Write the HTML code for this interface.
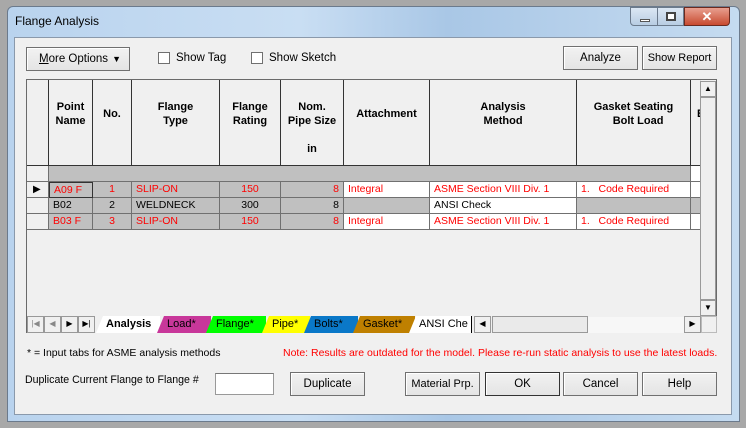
<!DOCTYPE html>
<html><head><style>
*{margin:0;padding:0;box-sizing:border-box}
body{width:746px;height:428px;overflow:hidden;background:#a8a8a8;font-family:"Liberation Sans",sans-serif;font-size:12px;color:#000;position:relative}
.a{position:absolute}
.frame{left:7px;top:6px;width:733px;height:416px;background:linear-gradient(90deg,#b9d3ee,#c9def3 40%,#a9c7e6 60%,#c5dbf0);border:1px solid #6b7a8c;border-radius:6px 6px 0 0}
.panel{left:14px;top:37px;width:718px;height:378px;background:#f0f0f0;border:1px solid #8a99ab}
.btn{position:absolute;background:linear-gradient(#f2f2f2,#e4e4e4);border:1px solid #707070;box-shadow:inset 1px 1px #fff;text-align:center;font-size:11.5px}
.cb{position:absolute;width:12px;height:12px;border:1px solid #707070;background:#fff}
.grid{left:26px;top:79px;width:691px;height:254px;border:1px solid #6a6a6a;background:#f0f0f0;overflow:hidden}
.c{position:absolute;border-right:1px solid #333;border-bottom:1px solid #333;font-weight:bold;text-align:center;font-size:11px;line-height:14px;background:#f0f0f0}
.r{position:absolute;border-right:1px solid #707070;border-bottom:1px solid #707070;font-size:10.5px;line-height:15px;padding:0 4px;white-space:nowrap;overflow:hidden}
.red{color:#f00}.g{background:#c0c0c0}.w{background:#fff}
.tab{position:absolute;top:316px;height:17px;font-size:11px;line-height:17px;padding-left:10px;clip-path:polygon(0 100%,7px 0,100% 0,100% 100%);white-space:nowrap;overflow:hidden}
.sb{position:absolute;background:#f0f0f0;border:1px solid #999;font-size:8px;text-align:center;line-height:14px}
</style></head><body>
<div class="a frame"></div>
<div class="a" style="left:15px;top:14px;font-size:12px">Flange Analysis</div>
<div class="a" style="left:630px;top:7px;width:28px;height:19px;border:1px solid #6b7a8c;border-radius:0 0 0 4px;background:linear-gradient(#dbe7f4,#b8cde3)"><div class="a" style="left:9px;top:11px;width:10px;height:3px;border:1px solid #555;background:#fff"></div></div>
<div class="a" style="left:657px;top:7px;width:27px;height:19px;border:1px solid #6b7a8c;background:linear-gradient(#dbe7f4,#b8cde3)"><div class="a" style="left:8px;top:4px;width:10px;height:9px;border:2px solid #444;background:#fff"></div></div>
<div class="a" style="left:684px;top:7px;width:46px;height:19px;border:1px solid #6b2a1f;border-radius:0 0 4px 0;background:linear-gradient(#e8a090,#c84a30);color:#fff;font-weight:bold;text-align:center;line-height:18px;font-size:13px">✕</div>
<div class="a panel"></div>
<div class="btn" style="left:26px;top:47px;width:104px;height:24px;line-height:22px;text-align:left;padding-left:12px"><u>M</u>ore Options<span style="position:absolute;right:8px;font-size:9px">▼</span></div>
<div class="cb" style="left:158px;top:52px"></div><div class="a" style="left:176px;top:52px;font-size:11.5px">Show Tag</div>
<div class="cb" style="left:251px;top:52px"></div><div class="a" style="left:269px;top:52px;font-size:11.5px">Show Sketch</div>
<div class="btn" style="left:563px;top:46px;width:75px;height:24px;line-height:22px">Analyze</div>
<div class="btn" style="left:642px;top:46px;width:75px;height:24px;line-height:22px;font-size:11px">Show Report</div>
<div class="a grid">
 <div class="c" style="left:0;top:0;width:22px;height:86px"></div>
 <div class="c" style="left:22px;top:0;width:44px;height:86px;padding-top:20px">Point<br>Name</div>
 <div class="c" style="left:66px;top:0;width:39px;height:86px;padding-top:27px">No.</div>
 <div class="c" style="left:105px;top:0;width:88px;height:86px;padding-top:20px">Flange<br>Type</div>
 <div class="c" style="left:193px;top:0;width:61px;height:86px;padding-top:20px">Flange<br>Rating</div>
 <div class="c" style="left:254px;top:0;width:63px;height:86px;padding-top:20px">Nom.<br>Pipe Size<br><br>in</div>
 <div class="c" style="left:317px;top:0;width:86px;height:86px;padding-top:27px">Attachment</div>
 <div class="c" style="left:403px;top:0;width:147px;height:86px;padding-top:20px">Analysis<br>Method</div>
 <div class="c" style="left:550px;top:0;width:114px;height:86px;padding-top:20px">Gasket Seating<br>&nbsp;&nbsp;&nbsp;Bolt Load</div>
 <div class="c" style="left:664px;top:0;width:20px;height:86px;padding-top:27px;text-align:left;padding-left:6px">B</div>
 <div class="r" style="left:0;top:86px;width:22px;height:16px;background:#f0f0f0"></div>
 <div class="r g" style="left:22px;top:86px;width:642px;height:16px"></div>
 <div class="r w" style="left:664px;top:86px;width:20px;height:16px"></div>
 <div class="r" style="left:0;top:102px;width:22px;height:16px;background:#f0f0f0;font-size:10px;padding-left:6px">▶</div>
 <div class="r g red" style="left:22px;top:102px;width:44px;height:16px;border:1px solid #333">A09 F</div>
 <div class="r g red" style="left:66px;top:102px;width:39px;height:16px;text-align:center">1</div>
 <div class="r g red" style="left:105px;top:102px;width:88px;height:16px">SLIP-ON</div>
 <div class="r g red" style="left:193px;top:102px;width:61px;height:16px;text-align:center">150</div>
 <div class="r g red" style="left:254px;top:102px;width:63px;height:16px;text-align:right">8</div>
 <div class="r w red" style="left:317px;top:102px;width:86px;height:16px">Integral</div>
 <div class="r w red" style="left:403px;top:102px;width:147px;height:16px">ASME Section VIII Div. 1</div>
 <div class="r w red" style="left:550px;top:102px;width:114px;height:16px">1.&nbsp;&nbsp; Code Required</div>
 <div class="r w" style="left:664px;top:102px;width:20px;height:16px"></div>
 <div class="r" style="left:0;top:118px;width:22px;height:16px;background:#f0f0f0"></div>
 <div class="r g" style="left:22px;top:118px;width:44px;height:16px">B02</div>
 <div class="r g" style="left:66px;top:118px;width:39px;height:16px;text-align:center">2</div>
 <div class="r g" style="left:105px;top:118px;width:88px;height:16px">WELDNECK</div>
 <div class="r g" style="left:193px;top:118px;width:61px;height:16px;text-align:center">300</div>
 <div class="r g" style="left:254px;top:118px;width:63px;height:16px;text-align:right">8</div>
 <div class="r g" style="left:317px;top:118px;width:86px;height:16px"></div>
 <div class="r w" style="left:403px;top:118px;width:147px;height:16px">ANSI Check</div>
 <div class="r g" style="left:550px;top:118px;width:114px;height:16px"></div>
 <div class="r g" style="left:664px;top:118px;width:20px;height:16px"></div>
 <div class="r" style="left:0;top:134px;width:22px;height:16px;background:#f0f0f0"></div>
 <div class="r g red" style="left:22px;top:134px;width:44px;height:16px">B03 F</div>
 <div class="r g red" style="left:66px;top:134px;width:39px;height:16px;text-align:center">3</div>
 <div class="r g red" style="left:105px;top:134px;width:88px;height:16px">SLIP-ON</div>
 <div class="r g red" style="left:193px;top:134px;width:61px;height:16px;text-align:center">150</div>
 <div class="r g red" style="left:254px;top:134px;width:63px;height:16px;text-align:right">8</div>
 <div class="r w red" style="left:317px;top:134px;width:86px;height:16px">Integral</div>
 <div class="r w red" style="left:403px;top:134px;width:147px;height:16px">ASME Section VIII Div. 1</div>
 <div class="r w red" style="left:550px;top:134px;width:114px;height:16px">1.&nbsp;&nbsp; Code Required</div>
 <div class="r w" style="left:664px;top:134px;width:20px;height:16px"></div>
 <div class="a" style="left:673px;top:0;width:17px;height:236px;background:#f0f0f0;border-left:1px solid #ddd"></div>
 <div class="sb" style="left:673px;top:1px;width:16px;height:16px">▲</div>
 <div class="sb" style="left:673px;top:17px;width:16px;height:203px;background:#eeeeee"></div>
 <div class="sb" style="left:673px;top:220px;width:16px;height:16px">▼</div>
</div>
<div class="a" style="left:27px;top:316px;width:689px;height:17px;background:#f0f0f0"></div>
<div class="sb" style="left:27px;top:316px;width:17px;height:17px;color:#888">|◀</div>
<div class="sb" style="left:44px;top:316px;width:17px;height:17px;color:#888">◀</div>
<div class="sb" style="left:61px;top:316px;width:17px;height:17px">▶</div>
<div class="sb" style="left:78px;top:316px;width:17px;height:17px">▶|</div>
<div class="tab" style="left:96px;width:64px;background:#fff;font-weight:bold">Analysis</div>
<div class="tab" style="left:157px;width:54px;background:#c8379a">Load*</div>
<div class="tab" style="left:206px;width:60px;background:#00ff00">Flange*</div>
<div class="tab" style="left:262px;width:48px;background:#ffff00">Pipe*</div>
<div class="tab" style="left:304px;width:54px;background:#0a78c8">Bolts*</div>
<div class="tab" style="left:353px;width:62px;background:#bf8000">Gasket*</div>
<div class="tab" style="left:409px;width:63px;background:#fff;border-right:1px solid #000">ANSI Che</div>
<div class="sb" style="left:474px;top:316px;width:17px;height:17px">◀</div>
<div class="sb" style="left:492px;top:316px;width:96px;height:17px;background:#eaeaea"></div>
<div class="a" style="left:588px;top:317px;width:97px;height:16px;background:#f7f7f7"></div>
<div class="sb" style="left:684px;top:316px;width:17px;height:17px">▶</div>
<div class="a" style="left:701px;top:316px;width:16px;height:17px;background:#f0f0f0;border:1px solid #bbb"></div>
<div class="a" style="left:27px;top:347px;font-size:10.5px">* = Input tabs for ASME analysis methods</div>
<div class="a" style="left:283px;top:347px;font-size:10.5px;color:#f00;white-space:nowrap">Note: Results are outdated for the model. Please re-run static analysis to use the latest loads.</div>
<div class="a" style="left:25px;top:374px;font-size:10.6px">Duplicate Current Flange to Flange #</div>
<div class="a" style="left:215px;top:373px;width:59px;height:22px;background:#fff;border:1px solid #999;border-top-color:#777"></div>
<div class="btn" style="left:290px;top:372px;width:75px;height:24px;line-height:22px">Duplicate</div>
<div class="btn" style="left:405px;top:372px;width:75px;height:24px;line-height:22px;font-size:11px">Material Prp.</div>
<div class="btn" style="left:485px;top:372px;width:75px;height:24px;line-height:22px;border-color:#333">OK</div>
<div class="btn" style="left:563px;top:372px;width:75px;height:24px;line-height:22px">Cancel</div>
<div class="btn" style="left:642px;top:372px;width:75px;height:24px;line-height:22px">Help</div>
</body></html>
